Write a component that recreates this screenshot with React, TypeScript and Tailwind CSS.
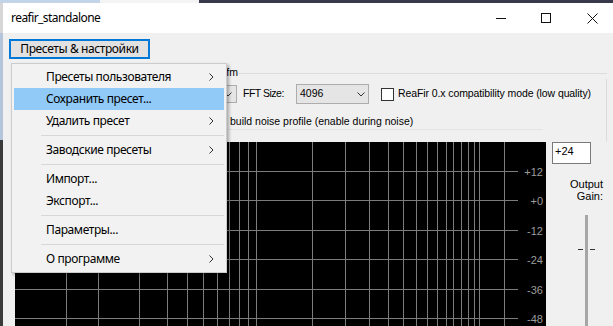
import clsx from "clsx";

type Item = { label: string; sub?: boolean; active?: boolean } | "sep";

const menuItems: Item[] = [
  { label: "Пресеты пользователя", sub: true },
  { label: "Сохранить пресет...", active: true },
  { label: "Удалить пресет", sub: true },
  "sep",
  { label: "Заводские пресеты", sub: true },
  "sep",
  { label: "Импорт..." },
  { label: "Экспорт..." },
  "sep",
  { label: "Параметры..." },
  "sep",
  { label: "О программе", sub: true },
];

// grid of the spectrum view, x / y in px inside the black panel
const vLines = [51, 83, 124, 152, 172, 188, 202, 214, 224, 233, 241, 297, 330, 354, 373, 388, 401, 412, 422, 431, 438, 446, 453, 459, 464, 489];
const hLines = [29, 58, 88, 117, 147, 176];
const dbLabels = ["+12", "+0", "-12", "-24", "-36", "-48"];

function Chevron() {
  return (
    <svg width="5" height="8" viewBox="0 0 5 8">
      <path d="M0.5 0.5 L4 4 L0.5 7.5" fill="none" stroke="#333" strokeWidth="1" />
    </svg>
  );
}

function ComboArrow() {
  return (
    <svg width="8" height="5" viewBox="0 0 8 5">
      <path d="M0.5 0.5 L4 4 L7.5 0.5" fill="none" stroke="#333" strokeWidth="1" />
    </svg>
  );
}

function Checkbox() {
  return <div className="w-[13px] h-[13px] shrink-0 border border-[#333333] bg-white" />;
}

function Spectrum() {
  return (
    <svg width="531" height="184" className="block">
      <rect width="531" height="184" fill="#000" />
      {vLines.map((x) => (
        <line key={x} x1={x + 0.5} y1={0} x2={x + 0.5} y2={184} stroke="#7c7c7c" strokeWidth="1" />
      ))}
      {hLines.map((y) => (
        <line key={y} x1={0} y1={y + 0.5} x2={503} y2={y + 0.5} stroke="#7c7c7c" strokeWidth="1" />
      ))}
      {dbLabels.map((t, i) => (
        <text
          key={t}
          x={528}
          y={hLines[i] + 4.5}
          textAnchor="end"
          fontSize="11"
          fill="#9c9c9c"
          fontFamily="'Liberation Sans', Arial, sans-serif"
        >
          {t}
        </text>
      ))}
    </svg>
  );
}

export default function App() {
  return (
    <div className="relative w-[613px] h-[326px] overflow-hidden flex flex-col bg-[#f0f0f0] font-['Liberation_Sans',Arial,sans-serif] text-[10.5px] text-black">
      {/* desktop behind the window */}
      <div className="flex h-[3px] shrink-0">
        <div className="w-[100px] bg-[#c3d3e8]" />
        <div className="w-[99px] bg-[#f4f4f4]" />
        <div className="flex-1 bg-[#383a4c]" />
      </div>

      <div className="flex h-[323px] shrink-0">
        <div className="w-[3px] shrink-0 flex flex-col">
          <div className="h-[30px] bg-[#d6d6d6]" />
          <div className="h-[107px] bg-[#b4c4da]" />
          <div className="flex-1 bg-[#3a3a3a]" />
        </div>

        <div className="flex-1 flex flex-col min-w-0">
          {/* title bar */}
          <div className="h-[30px] shrink-0 bg-white flex items-center font-['Noto_Sans',sans-serif] text-[12px]">
            <span className="pl-[8px] tracking-[-0.55px]">reafir_standalone</span>
            <div className="ml-auto flex h-full">
              <div className="w-[40px] flex items-center justify-center">
                <svg width="10" height="10" viewBox="0 0 10 10">
                  <line x1="0" y1="5.5" x2="10" y2="5.5" stroke="#111" strokeWidth="1" />
                </svg>
              </div>
              <div className="w-[50px] flex items-center justify-center">
                <svg width="10" height="10" viewBox="0 0 10 10">
                  <rect x="0.5" y="0.5" width="9" height="9" fill="none" stroke="#111" strokeWidth="1" />
                </svg>
              </div>
              <div className="w-[42px] flex items-center justify-center">
                <svg width="11" height="11" viewBox="0 0 11 11">
                  <path d="M0.5 0.5 L10.5 10.5 M10.5 0.5 L0.5 10.5" stroke="#111" strokeWidth="1" />
                </svg>
              </div>
            </div>
          </div>

          {/* dialog body */}
          <div className="h-[293px] shrink-0 flex flex-col">
            <div className="h-[26px] shrink-0 pt-[6px] pl-[6px]">
              <button
                type="button"
                className="h-[20px] w-[141px] border-2 border-[#0078d7] bg-[#e1e1e1] font-['Noto_Sans',sans-serif] text-[12px] tracking-[-0.4px] leading-none flex items-center justify-center"
              >
                Пресеты &amp; настройки
              </button>
            </div>

            {/* group box */}
            <div className="h-[75px] shrink-0 mt-[8px] ml-[9px] mr-[6px] flex flex-col">
              <div className="flex items-center h-[12px] shrink-0">
                <span className="w-[226px] text-right leading-[12px] pb-[2px]">:fm</span>
                <div className="flex-1 h-px bg-[#dcdcdc]" />
              </div>
              <div className="border-r border-[#dcdcdc] h-[63px] shrink-0">
                <div className="flex items-center h-[20px] mt-[5px]">
                  <div className="ml-[138px] w-[87px] h-[18px] border border-[#adadad] bg-[#e5e5e5] flex items-center justify-end pr-[4px]">
                    <ComboArrow />
                  </div>
                  <span className="ml-[6px] w-[53px] tracking-[-0.5px]">FFT Size:</span>
                  <div className="w-[73px] h-[20px] border border-[#adadad] bg-[#e5e5e5] flex items-center pl-[3px] pr-[3px]">
                    <span className="flex-1">4096</span>
                    <ComboArrow />
                  </div>
                  <div className="ml-[12px]">
                    <Checkbox />
                  </div>
                  <span className="ml-[4px] whitespace-nowrap tracking-[-0.1px]">
                    ReaFir 0.x compatibility mode (low quality)
                  </span>
                </div>
                <div className="ml-[202px] w-[329px] h-[15px] mt-[11px] flex items-center border-b border-[#e3e3e3]">
                  <Checkbox />
                  <span className="ml-[3px] whitespace-nowrap">build noise profile (enable during noise)</span>
                </div>
              </div>
            </div>

            {/* spectrum + output gain */}
            <div className="flex h-[184px] shrink-0">
              <div className="ml-[12px] w-[531px] h-[184px] bg-black">
                <Spectrum />
              </div>
              <div className="flex-1 flex flex-col">
                <div className="ml-[6px] w-[39px] h-[22px] border border-[#7a7a7a] bg-white pl-[2px] pt-[3px] text-[11px] leading-none">
                  +24
                </div>
                <div className="mt-[14px] pr-[10px] text-right text-[11px] leading-[12px]">
                  Output
                  <br />
                  Gain:
                </div>
                <div className="mt-[13px] ml-[32px] flex flex-1">
                  <div className="w-[5px] h-px mt-[34px] bg-[#333]" />
                  <div className="w-[2px]" />
                  <div className="w-[3px] bg-[#a6a6a6]" />
                  <div className="w-[2px]" />
                  <div className="w-[5px] h-px mt-[34px] bg-[#333]" />
                </div>
              </div>
            </div>
          </div>
        </div>
      </div>

      {/* popup menu */}
      <div className="absolute left-[11px] top-[63px] w-[216px] border border-[#cccccc] bg-[#f2f2f2] p-[2px] shadow-[2px_2px_3px_rgba(0,0,0,0.3)] font-['Noto_Sans',sans-serif] text-[12px] tracking-[-0.4px] text-black">
        {menuItems.map((it, i) =>
          it === "sep" ? (
            <div key={i} className="h-[7px] flex items-center pl-[27px]">
              <div className="h-px w-full bg-[#d7d7d7]" />
            </div>
          ) : (
            <div
              key={i}
              className={clsx("h-[22px] flex items-center pl-[32px] pr-[10px]", it.active && "bg-[#91c9f7]")}
            >
              <span className="flex-1 whitespace-nowrap">{it.label}</span>
              {it.sub && <Chevron />}
            </div>
          )
        )}
      </div>
    </div>
  );
}
